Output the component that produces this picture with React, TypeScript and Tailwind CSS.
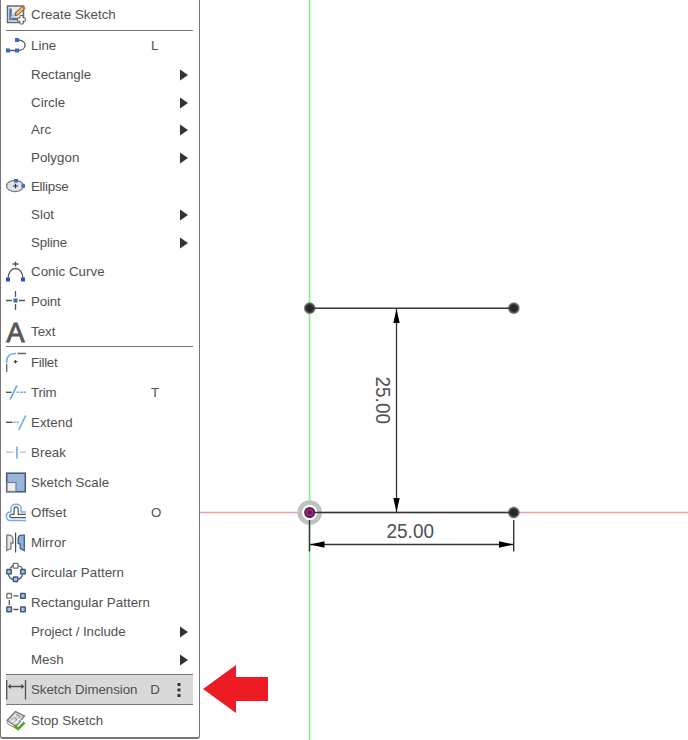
import type { ReactNode } from "react";

const BLUE = "#3a68c4";
const SKY = "#76aaf2";
const INK = "#555555";

function Icon({ children }: { children?: ReactNode }) {
  return (
    <svg viewBox="0 0 20 20" className="h-5 w-5 shrink-0 overflow-visible" fill="none">
      {children}
    </svg>
  );
}

const icons: Record<string, ReactNode> = {
  create: (
    <>
      <rect x="1.5" y="1" width="16" height="16.5" fill="#ececec" stroke="#66686c" strokeWidth="1.5" />
      <path d="M4.5 3.5V14H14" stroke="#4c73a8" strokeWidth="2.5" />
      <path d="M5 13L12 5" stroke="#b9c5d5" strokeWidth="2" />
      <path d="M10 7.5L16.5 1L19 3.5L12.5 9.5L9 11Z" fill="#efbd60" stroke="#74563c" />
      <path d="M16 1L18 0.5L19 3L17.5 4.5Z" fill="#bd694c" />
      <path d="M14 10.5h3v2.5h2.5v3H17V19h-3v-3h-2.5v-3H14Z" fill="#fff" stroke="#66686c" />
    </>
  ),
  line: (
    <>
      <path d="M2 14.5H12C21.5 14.5 21.5 4 12 4H11" stroke={INK} strokeWidth="1.3" />
      <path d="M0 12.5h4v4H0zM9 12.5h4v4H9zM9 2h4v4H9z" fill={BLUE} />
    </>
  ),
  ellipse: (
    <>
      <ellipse cx="9" cy="9" rx="8.5" ry="5.7" fill="#dfe3e9" stroke="#777b80" strokeWidth="1.3" />
      <path d="M7 9h5M9.5 6.8v4.5" stroke="#333" strokeWidth="1.2" />
      <path d="M8 2h4v3.5H8zM15.5 7.2H19v3.6h-3.5z" fill={BLUE} />
    </>
  ),
  conic: (
    <>
      <path d="M2 17C2 3 17 3 17 17M9.5 -0.5v5M6.5 2h6" stroke={INK} strokeWidth="1.3" />
      <path d="M0 15.5h4v4H0zM15 15.5h4v4h-4z" fill="#304fc0" />
    </>
  ),
  point: (
    <>
      <path d="M0 8.5h6M13 8.5h6M9.5 -1v6M9.5 12v6" stroke={INK} strokeWidth="1.3" />
      <path d="M7.5 6.5h4v4h-4z" fill={BLUE} />
    </>
  ),
  text: (
    <text x="0.5" y="19.5" fontSize="27" fill="#585858" stroke="#585858" strokeWidth="1" fontFamily="Liberation Sans, sans-serif">A</text>
  ),
  fillet: (
    <>
      <path d="M0.7 10V8Q1 0.8 9 0.5H10" stroke={SKY} strokeWidth="1.7" />
      <path d="M11.5 0.5H20M0.7 11v8" stroke="#666" strokeWidth="1.3" />
      <path d="M7.7 8.7h3.6M9.5 6.9v3.6" stroke="#444" strokeWidth="1.2" />
    </>
  ),
  trim: (
    <>
      <path d="M0 9.3h5.5" stroke={INK} strokeWidth="1.4" />
      <path d="M4 16.5L11 2.5" stroke={SKY} strokeWidth="1.7" />
      <path d="M10.5 9.3H20" stroke={SKY} strokeWidth="1.5" strokeDasharray="2.6 1" />
    </>
  ),
  extend: (
    <>
      <path d="M0 9.3h6.5" stroke={INK} strokeWidth="1.4" />
      <path d="M7.5 9.3h6.2" stroke={SKY} strokeWidth="1.5" strokeDasharray="2.2 0.9" />
      <path d="M12.8 17L19.7 2.5" stroke={SKY} strokeWidth="1.7" />
    </>
  ),
  break: (
    <>
      <path d="M0 9.3h7.5M14 9.3h6" stroke="#c5c8c9" strokeWidth="1.4" />
      <path d="M10.9 3.5v12" stroke={SKY} strokeWidth="1.6" />
    </>
  ),
  scale: (
    <>
      <rect x="0.7" y="0.2" width="18.6" height="18.6" fill="#98b6db" stroke="#40577a" strokeWidth="1.5" />
      <rect x="1" y="9.5" width="9" height="9" fill="#ededed" stroke="#777c82" strokeWidth="1.2" />
    </>
  ),
  offset: (
    <>
      <path d="M20 9H15.2V6C15.2 -0.5 5 -0.5 5 6V9H4.5C-1 9-1 17.5 4.5 17.5H20" stroke={SKY} strokeWidth="1.5" />
      <path d="M20 11.3H12.2V6.5C12.2 3 8 3 8 6.5V11.3H5.5C3 11.3 3 14.7 5.5 14.7H20" stroke={INK} strokeWidth="1.2" />
    </>
  ),
  mirror: (
    <>
      <path d="M0.8 2.2H3C5.5 2.2 7 4 7 6V10H5V15.5L0.8 17.5Z" fill="#e6e6e6" stroke="#777" strokeWidth="1.3" />
      <path d="M9.6 -0.5v20" stroke="#4c4c4c" strokeWidth="1.2" />
      <path d="M18.3 2.2H16C13.5 2.2 12.2 4 12.2 6V10.5L14.2 11V15.5L18.3 17.5Z" fill="#8eb2df" stroke="#405f8b" strokeWidth="1.3" />
    </>
  ),
  circular: (
    <>
      <path d="M4 5.5L7 2.5M12 2.5Q15.5 3.5 16.5 6M2.5 12Q3.5 15.5 7 16.5M16.5 12Q15.5 15.5 12 16.5" stroke={INK} strokeWidth="1.1" />
      <rect x="7.2" y="0.3" width="4.8" height="4.8" rx="0.5" fill="#fff" stroke="#737373" strokeWidth="1.3" />
      <rect x="0.8" y="6.5" width="4.5" height="4.5" rx="0.5" fill="#a4c2e9" stroke="#40577a" strokeWidth="1.4" />
      <rect x="14.7" y="6.5" width="4.5" height="4.5" rx="0.5" fill="#a4c2e9" stroke="#40577a" strokeWidth="1.4" />
      <rect x="7.3" y="14" width="4.5" height="4.5" rx="0.5" fill="#a4c2e9" stroke="#40577a" strokeWidth="1.4" />
    </>
  ),
  rectangular: (
    <>
      <path d="M7.5 2.8h5M3.3 7v5M7.5 16.5h5" stroke={INK} strokeWidth="1.3" />
      <rect x="0.8" y="0.5" width="4.7" height="4.7" rx="0.5" fill="#fff" stroke="#737373" strokeWidth="1.3" />
      <rect x="14.6" y="0.5" width="4.7" height="4.7" rx="0.5" fill="#a4c2e9" stroke="#40577a" strokeWidth="1.4" />
      <rect x="0.8" y="14" width="4.7" height="4.7" rx="0.5" fill="#a4c2e9" stroke="#40577a" strokeWidth="1.4" />
      <rect x="14.6" y="14" width="4.7" height="4.7" rx="0.5" fill="#a4c2e9" stroke="#40577a" strokeWidth="1.4" />
    </>
  ),
  dimension: (
    <>
      <path d="M0.7 0v19.5M19.5 0v19.5M3 6.5h14" stroke="#505050" strokeWidth="1.3" />
      <path d="M1.5 6.5L5 4v5zM18.7 6.5L15.2 4v5z" fill="#505050" />
    </>
  ),
  stop: (
    <>
      <path d="M1 9.5L9.5 0.5L18.5 5L10 15.5Z" fill="#d2d4d6" stroke="#707376" strokeWidth="1.2" />
      <path d="M1 10.5L2 13L10 17.5" stroke="#888" />
      <path d="M4.5 8L13 12M7 5.5L15.5 9.5M10 3L5.5 11M14 5L9 13" stroke="#fff" strokeWidth="0.8" />
      <path d="M5 9.5L8 6.5L11 8L9 10.5M10 3.5L14 5.5L12.5 7.5" stroke="#777" strokeWidth="0.8" />
      <path d="M8.5 14.5L12 18L18.5 11.5" stroke="#55a51c" strokeWidth="2.5" />
    </>
  ),
};

type Item = {
  label?: string;
  icon?: string;
  shortcut?: string;
  sub?: boolean;
  active?: boolean;
  size: string;
  tracking?: string;
};

const items: Item[] = [
  { label: "Create Sketch", icon: "create", size: "h-[30px]" },
  { size: "" },
  { label: "Line", icon: "line", shortcut: "L", size: "h-[30px]" },
  { label: "Rectangle", sub: true, size: "h-7" },
  { label: "Circle", sub: true, size: "h-[27px]" },
  { label: "Arc", sub: true, size: "h-7" },
  { label: "Polygon", sub: true, size: "h-7" },
  { label: "Ellipse", icon: "ellipse", size: "h-[29px]", tracking: "tracking-[-0.25px]" },
  { label: "Slot", sub: true, size: "h-7" },
  { label: "Spline", sub: true, size: "h-7", tracking: "tracking-[-0.15px]" },
  { label: "Conic Curve", icon: "conic", size: "h-[30px]" },
  { label: "Point", icon: "point", size: "h-[30px]", tracking: "tracking-[-0.15px]" },
  { label: "Text", icon: "text", size: "h-[29px]" },
  { size: "" },
  { label: "Fillet", icon: "fillet", size: "h-[31px]", tracking: "tracking-[-0.3px]" },
  { label: "Trim", icon: "trim", shortcut: "T", size: "h-[30px]", tracking: "tracking-[-0.15px]" },
  { label: "Extend", icon: "extend", size: "h-[30px]" },
  { label: "Break", icon: "break", size: "h-[30px]" },
  { label: "Sketch Scale", icon: "scale", size: "h-[30px]" },
  { label: "Offset", icon: "offset", shortcut: "O", size: "h-[30px]" },
  { label: "Mirror", icon: "mirror", size: "h-[30px]" },
  { label: "Circular Pattern", icon: "circular", size: "h-[30px]" },
  { label: "Rectangular Pattern", icon: "rectangular", size: "h-[30px]" },
  { label: "Project / Include", sub: true, size: "h-7", tracking: "tracking-[-0.05px]" },
  { label: "Mesh", sub: true, size: "h-7" },
  { size: "" },
  { label: "Sketch Dimension", icon: "dimension", shortcut: "D", active: true, size: "h-[29px]", tracking: "tracking-[-0.05px]" },
  { size: "" },
  { label: "Stop Sketch", icon: "stop", size: "h-[31px]" },
];

function Row({ item }: { item: Item }) {
  if (!item.label) return <div className="h-px shrink-0 bg-[#777777]" />;
  return (
    <div className={`flex shrink-0 items-center ${item.size} ${item.active ? "bg-[#d9d9d9]" : ""}`}>
      <Icon>{item.icon && icons[item.icon]}</Icon>
      <span className={`ml-[5px] w-[120px] whitespace-nowrap ${item.tracking ?? "tracking-[0.04px]"}`}>
        {item.label}
      </span>
      <span className="w-[26px]">{item.shortcut}</span>
      {item.sub && (
        <svg viewBox="0 0 8 12" className="ml-[3px] h-3 w-2">
          <path d="M0 0.5L8 6L0 11.5Z" fill="#333" />
        </svg>
      )}
      {item.active && (
        <svg viewBox="0 0 4 16" className="ml-px h-4 w-4" preserveAspectRatio="xMinYMid meet">
          <path d="M0.5 1h3v3h-3zM0.5 6.5h3v3h-3zM0.5 12h3v3h-3z" fill="#333" />
        </svg>
      )}
    </div>
  );
}

function Canvas() {
  return (
    <svg viewBox="200 0 488 740" className="h-[740px] w-[488px] shrink-0" fontFamily="Liberation Sans, sans-serif">
      <defs>
        <radialGradient id="dot">
          <stop offset="0.5" stopColor="#262626" />
          <stop offset="0.8" stopColor="#404040" stopOpacity="0.75" />
          <stop offset="1" stopColor="#555" stopOpacity="0" />
        </radialGradient>
      </defs>
      <path d="M200 512.5H688" stroke="#f3a2a2" strokeWidth="1.3" />
      <path d="M309.5 0V740" stroke="#92e892" strokeWidth="1.6" />
      <circle cx="309.7" cy="512.5" r="10" fill="#fff" stroke="#c1c1c1" strokeWidth="4.6" />
      <path d="M309.5 308.3H514M309.5 512.5H514" stroke="#333" strokeWidth="1.5" />
      <path d="M396.5 309V512M310 544.5H514" stroke="#333" strokeWidth="1.3" />
      <path d="M309.5 520V551.5M513.7 520V551.5" stroke="#333" strokeWidth="1.4" />
      <path d="M396.5 309L399.7 323H393.3ZM396.5 512L393.3 498H399.7ZM310 544.5L324.5 541.3V547.7ZM513.5 544.5L499 541.3V547.7Z" fill="#000" />
      <circle cx="309.7" cy="308.2" r="6.4" fill="url(#dot)" />
      <circle cx="513.8" cy="308.2" r="6.4" fill="url(#dot)" />
      <circle cx="513.8" cy="512.5" r="6.4" fill="url(#dot)" />
      <circle cx="309.7" cy="512.5" r="4.8" fill="#a01b80" stroke="#40283b" strokeWidth="1.4" />
      <circle cx="309.7" cy="512.5" r="1.4" fill="#40283b" />
      <text x="386.5" y="537.8" fontSize="19.6" textLength="47.5" lengthAdjust="spacingAndGlyphs" fill="#505050">25.00</text>
      <text transform="translate(375.7 376.5) rotate(90)" fontSize="19.6" textLength="47.5" lengthAdjust="spacingAndGlyphs" fill="#505050">25.00</text>
      <path d="M203 689L236 665V677H268V701H236V713Z" fill="#ed1c24" />
    </svg>
  );
}

export default function App() {
  return (
    <main className="flex h-[740px] w-[688px] overflow-hidden bg-white">
      <nav className="flex h-[739px] w-[200px] shrink-0 flex-col rounded-b-[3px] border-x border-b-2 border-[#777777] bg-white pr-[6px] pl-[5px] font-['Liberation_Sans',sans-serif] text-[13.3px] leading-4 text-[#505050]">
        {items.map((item, index) => (
          <Row key={index} item={item} />
        ))}
      </nav>
      <Canvas />
    </main>
  );
}
